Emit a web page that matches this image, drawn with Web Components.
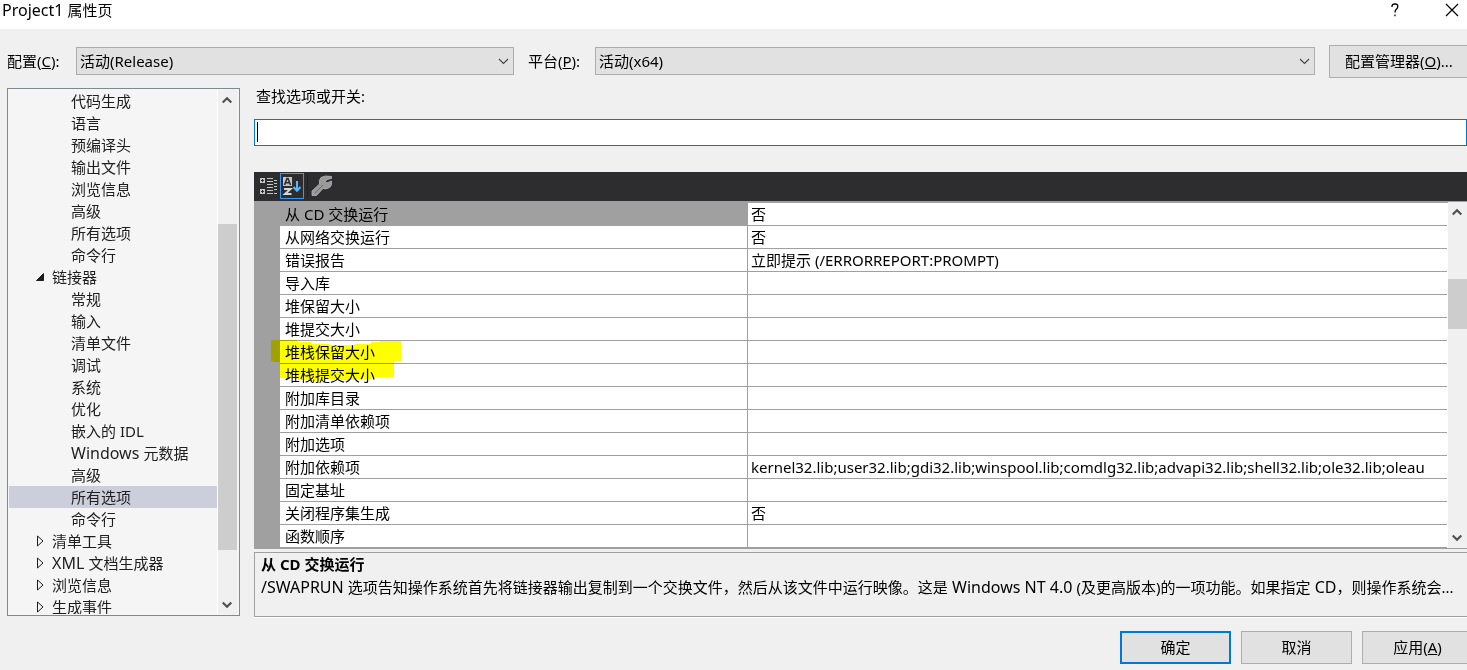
<!DOCTYPE html>
<html lang="zh-CN">
<head>
<meta charset="utf-8">
<title>Project1 属性页</title>
<style>
  html, body { margin: 0; height: 100%; }
  body {
    --ui-font: "Noto Sans", "Noto Sans CJK SC", sans-serif;
    font: 15px/22px var(--ui-font);
    color: #000;
    background: #f0f0f0;
    overflow: hidden;
  }
</style>
</head>
<body>
<property-dialog></property-dialog>

<script>
class BaseElement extends HTMLElement {
  constructor() {
    super();
    this.attachShadow({ mode: 'open' });
    const t = document.createElement('template');
    t.innerHTML = '<style>*{box-sizing:border-box}</style>' + this.constructor.markup;
    this.shadowRoot.append(t.content.cloneNode(true));
  }
  $(selector) { return this.shadowRoot.querySelector(selector); }
}

/* Caption bar with the help and close buttons */
class TitleBar extends BaseElement {
  static markup = `
    <style>
      :host { display: flex; align-items: flex-start; height: 29px; background: #fff; padding-left: 2px; flex: none; }
      h1 { flex: 1; margin: 0; font: inherit; line-height: 20px; }
      button { border: 0; padding: 0; background: none; font: inherit; width: 30px; height: 20px; display: grid; place-items: center; }
      .help { margin-right: 27px; }
      svg { display: block; }
      ::slotted(.latin) { font-size: 16px; }
    </style>
    <h1><slot></slot></h1>
    <button class="help" aria-label="帮助"><svg width="8" height="14" viewBox="0 0 8 14" fill="none" stroke="#000" stroke-width="1.300"><path d="M1 4V3Q1.200 1 4 1Q6.800 1 6.800 3.500Q6.800 5 5.300 6.200Q4 7.300 4 9.500M4 11.500V13.200"/></svg></button>
    <button aria-label="关闭"><svg width="14" height="14" viewBox="0 0 14 14" fill="none" stroke="#000" stroke-width="1.200"><path d="M1 1L13 13M13 1L1 13"/></svg></button>`;
}
customElements.define('title-bar', TitleBar);

/* Label with a drop-down */
class FieldSelect extends BaseElement {
  static markup = `
    <style>
      :host { display: flex; align-items: center; min-width: 0; }
      label { flex: none; width: var(--label-width, 68px); }
      .box { flex: 1; min-width: 0; display: grid; align-items: center; position: relative; }
      select { appearance: none; width: 100%; height: 28px; margin: 0; padding: 0 24px 0 3px; border: 1px solid #adadad; border-radius: 0; background: #e1e1e1; color: #000; font: inherit; }
      svg { position: absolute; right: 5px; pointer-events: none; }
    </style>
    <label for="s"><slot></slot></label>
    <div class="box"><select id="s"><option></option></select>
      <svg width="11" height="7" viewBox="0 0 11 7" fill="none" stroke="#444" stroke-width="1.100"><path d="M1 1L5.500 5.500L10 1"/></svg></div>`;
  connectedCallback() { this.$('option').textContent = this.getAttribute('value'); }
}
customElements.define('field-select', FieldSelect);

class PushButton extends BaseElement {
  static markup = `
    <style>
      :host { display: block; flex: none; width: 111px; }
      button { width: 100%; height: 33px; padding: 0 0 2px; border: 1px solid #adadad; background: #e1e1e1; color: #000; font: inherit; }
      :host([primary]) button { border: 2px solid #0078d7; }
    </style>
    <button type="button"><slot></slot></button>`;
}
customElements.define('push-button', PushButton);

/* Vertical scroll bar; before / size / after give the proportions of the track */
class ScrollBar extends BaseElement {
  static markup = `
    <style>
      :host { display: flex; flex-direction: column; flex: none; width: 19px; background: #f0f0f0; }
      button { flex: none; height: 19px; padding: 0; border: 0; background: none; display: grid; place-items: center; }
      .thumb { background: #cdcdcd; }
    </style>
    <button aria-label="向上滚动"><svg width="11" height="8" viewBox="0 0 11 8" fill="none" stroke="#505050" stroke-width="2.200"><path d="M.7 6.500L5 2.200L9.300 6.500"/></svg></button>
    <div class="before"></div><div class="thumb"></div><div class="after"></div>
    <button aria-label="向下滚动"><svg width="11" height="8" viewBox="0 0 11 8" fill="none" stroke="#505050" stroke-width="2.200"><path d="M.7 1.500L5 5.800L9.300 1.500"/></svg></button>`;
  connectedCallback() {
    this.$('.before').style.flex = this.getAttribute('before');
    this.$('.thumb').style.flex = this.getAttribute('size');
    this.$('.after').style.flex = this.getAttribute('after');
  }
}
customElements.define('scroll-bar', ScrollBar);

class TreeItem extends BaseElement {
  static markup = `
    <style>
      :host { display: flex; align-items: center; height: 22px; flex: none; padding-left: 62px; color: #1e1e1e; white-space: nowrap; }
      :host([branch]) { padding-left: 25px; }
      :host([selected]) { background: #cccedb; }
      svg { display: none; width: 12px; height: 12px; margin-right: 6px; fill: none; stroke: #1e1e1e; }
      :host([branch="closed"]) .closed, :host([branch="open"]) .open { display: block; }
      ::slotted(.latin) { font-size: 16px; }
    </style>
    <svg class="closed" viewBox="0 0 12 12"><path d="M3.500 1V11L9 6Z"/></svg>
    <svg class="open" viewBox="0 0 12 12"><path d="M9.500 2.500V9.500H2.500Z" fill="#1e1e1e"/></svg>
    <div><slot></slot></div>`;
}
customElements.define('tree-item', TreeItem);

class NavTree extends BaseElement {
  static markup = `
    <style>
      :host { display: flex; flex: none; width: 233px; padding: 1px; border: 1px solid #828790; background: #f5f5f5; overflow: hidden; }
      .items { flex: 1; display: flex; flex-direction: column; min-height: 0; overflow: hidden; }
      scroll-bar { border-left: 1px solid #fff; width: 20px; margin-right: 1px; }
    </style>
    <div class="items" role="tree"><slot></slot></div>
    <scroll-bar before="115" size="326" after="45"></scroll-bar>`;
}
customElements.define('nav-tree', NavTree);

class SearchField extends BaseElement {
  static markup = `
    <style>
      :host { display: block; }
      label { display: block; padding-left: 2px; margin-bottom: 12px; }
      input { display: block; width: 100%; height: 27px; padding: 0 4px; border: 1px solid #0078d7; border-radius: 0; outline: 0; font: inherit; caret-color: transparent;
        background: linear-gradient(#000, #000) 2px 2px / 1px 20px no-repeat #fff; }
    </style>
    <label for="q"><slot></slot></label>
    <input id="q" type="text">`;
}
customElements.define('search-field', SearchField);

class GridToolbar extends BaseElement {
  static markup = `
    <style>
      :host { display: flex; align-items: center; height: 29px; padding: 0 2px 2px; background: #2d2d30; }
      button { width: 24px; height: 26px; margin: 0; padding: 0; border: 0; background: none; display: grid; place-items: center; }
      .on { border: 1px solid #3399ff; }
      hr { width: 1px; height: 23px; margin: 0 2px 0 3px; border: 0; background: #222224; }
    </style>
    <button aria-label="按类别"><svg width="18" height="18" viewBox="0 0 18 18"><path fill="#c5c5c5" d="M1 1h5v5H1zM1 12h5v5H1z"/><path stroke="#2d2d30" d="M3.500 2v3M2 3.500h3M3.500 13v3M2 14.500h3"/><path stroke="#c5c5c5" d="M8 1.500h6M8 4.500h6M8 7.500h6M8 10.500h6M8 13.500h6M8 16.500h6M15 3.500h3M15 6.500h3M15 9.500h3M15 12.500h3M15 16.500h3"/></svg></button>
    <button class="on" aria-label="按字母顺序"><svg width="20" height="20" viewBox="0 0 20 20" fill="none"><path fill="#c5c5c5" d="M1 1h9v9H1z"/><path stroke="#2d2d30" stroke-width="1.600" d="M2.500 9L5 2.500H6L8.500 9M3.500 6.800H7.500"/><path stroke="#d6d6d6" stroke-width="2" d="M2 13H8.500L3 18H9.500"/><path stroke="#55b8ff" stroke-width="2" d="M15 5V14M11.500 11L15 14.700L18.500 11"/></svg></button>
    <hr>
    <button aria-label="属性页"><svg width="22" height="22" viewBox="0 0 22 22"><path fill="#999" stroke="#b5b5b5" stroke-width=".8" d="M1 20.500V16L8.500 9Q7.500 5 10 2.500Q13.500 0 20.500 1.500V3.500L16 4.500L14.500 6.500L16 8L20.500 6V9.500Q20 12 17.500 13Q15 14.500 12 13.500L5.500 20.500Z"/><path stroke="#6d6d6d" d="M4 18L12 10"/></svg></button>`;
}
customElements.define('grid-toolbar', GridToolbar);

class PropertyGrid extends BaseElement {
  static markup = `
    <style>
      :host { display: flex; position: relative; padding-left: 26px; border-top: 1px solid #a0a0a0; border-bottom: 1px solid #a0a0a0; background: #a0a0a0; }
      .body { flex: 1; min-width: 0; background: #fff; padding-right: 1px; border-top: 1px solid #a0a0a0; }
      table { width: 100%; table-layout: fixed; border-collapse: separate; border-spacing: 0; }
      th, td { height: 23px; padding: 0 0 0 3px; border-bottom: 1px solid #a0a0a0; font-weight: 400; text-align: left; line-height: 22px; white-space: nowrap; overflow: hidden; }
      th { width: 468px; padding-left: 5px; border-right: 1px solid #a0a0a0; }
      tr.current th { background: #a0a0a0; }
      .marker { position: absolute; left: 17px; top: 138px; mix-blend-mode: multiply; pointer-events: none; }
    </style>
    <div class="body"><table><tbody></tbody></table></div>
    <scroll-bar before="58" size="50" after="199"></scroll-bar>
    <svg class="marker" width="131" height="42" viewBox="0 0 131 42" fill="#ff0"><path d="M0 0H26V2H40V4H58V5H84V4H100V2H109V1H130V21H123V37H101V39H82V40H68V39H54V41H40V40H27V38H9V22H2V21H0Z"/></svg>`;
  connectedCallback() {
    const rows = [
      ['从 CD 交换运行', '否'], ['从网络交换运行', '否'], ['错误报告', '立即提示 (/ERRORREPORT:PROMPT)'],
      ['导入库', ''], ['堆保留大小', ''], ['堆提交大小', ''], ['堆栈保留大小', ''], ['堆栈提交大小', ''],
      ['附加库目录', ''], ['附加清单依赖项', ''], ['附加选项', ''],
      ['附加依赖项', 'kernel32.lib;user32.lib;gdi32.lib;winspool.lib;comdlg32.lib;advapi32.lib;shell32.lib;ole32.lib;oleau'],
      ['固定基址', ''], ['关闭程序集生成', '否'], ['函数顺序', '']
    ];
    const body = this.$('tbody');
    rows.forEach(([name, value], i) => {
      const tr = body.insertRow();
      if (i === 0) tr.className = 'current';
      const th = document.createElement('th');
      th.scope = 'row';
      th.textContent = name;
      tr.append(th);
      tr.insertCell().textContent = value;
    });
  }
}
customElements.define('property-grid', PropertyGrid);

class DescriptionPane extends BaseElement {
  static markup = `
    <style>
      :host { display: block; flex: 1; margin-top: 3px; padding: 0 0 0 6px; border: 1px solid #a0a0a0; border-right: 0; box-shadow: 0 1px #fff; overflow: hidden; }
      h2 { margin: 0; font-size: 15px; line-height: 22px; font-weight: 700; }
      p { margin: 0; line-height: 24px; white-space: nowrap; }
      ::slotted(.latin) { font-size: 16px; }
    </style>
    <h2><slot name="title"></slot></h2>
    <p><slot></slot></p>`;
}
customElements.define('description-pane', DescriptionPane);

class PropertyDialog extends BaseElement {
  static markup = `
    <style>
      :host { display: flex; flex-direction: column; min-height: 100vh; overflow: hidden; }
      .config { display: flex; align-items: flex-start; flex: none; padding: 16px 0 10px 7px; gap: 14px; }
      .config field-select { margin-top: 2px; }
      .config field-select:nth-child(1) { flex: 507; --label-width: 69px; }
      .config field-select:nth-child(2) { flex: 787; --label-width: 67px; }
      .config push-button { width: 140px; margin-right: -2px; }
      main { display: flex; flex: 1; gap: 14px; padding-left: 7px; }
      nav-tree { height: 528px; }
      section { flex: 1; min-width: 0; display: flex; flex-direction: column; }
      search-field { padding-bottom: 26px; margin-top: -3px; }
      footer { display: flex; flex: none; justify-content: flex-end; gap: 10px; padding: 14px 0 6px; margin-right: -6px; }
    </style>
    <title-bar><span class="latin">Project1 </span>属性页</title-bar>
    <div class="config">
      <field-select value="活动(Release)">配置(<u>C</u>):</field-select>
      <field-select value="活动(x64)">平台(<u>P</u>):</field-select>
      <push-button>配置管理器(<u>O</u>)...</push-button>
    </div>
    <main>
      <nav-tree>
        <tree-item>代码生成</tree-item>
        <tree-item>语言</tree-item>
        <tree-item>预编译头</tree-item>
        <tree-item>输出文件</tree-item>
        <tree-item>浏览信息</tree-item>
        <tree-item>高级</tree-item>
        <tree-item>所有选项</tree-item>
        <tree-item>命令行</tree-item>
        <tree-item branch="open">链接器</tree-item>
        <tree-item>常规</tree-item>
        <tree-item>输入</tree-item>
        <tree-item>清单文件</tree-item>
        <tree-item>调试</tree-item>
        <tree-item>系统</tree-item>
        <tree-item>优化</tree-item>
        <tree-item>嵌入的 IDL</tree-item>
        <tree-item><span class="latin">Windows </span>元数据</tree-item>
        <tree-item>高级</tree-item>
        <tree-item selected>所有选项</tree-item>
        <tree-item>命令行</tree-item>
        <tree-item branch="closed">清单工具</tree-item>
        <tree-item branch="closed"><span class="latin">XML </span>文档生成器</tree-item>
        <tree-item branch="closed">浏览信息</tree-item>
        <tree-item branch="closed">生成事件</tree-item>
      </nav-tree>
      <section>
        <search-field>查找选项或开关:</search-field>
        <grid-toolbar></grid-toolbar>
        <property-grid></property-grid>
        <description-pane><span slot="title">从 CD 交换运行</span><span class="latin">/SWAPRUN </span>选项告知操作系统首先将链接器输出复制到一个交换文件，然后从该文件中运行映像。这是<span class="latin"> Windows NT 4.0 </span>(及更高版本)的一项功能。如果指定<span class="latin"> CD</span>，则操作系统会...</description-pane>
      </section>
    </main>
    <footer>
      <push-button primary>确定</push-button>
      <push-button>取消</push-button>
      <push-button>应用(<u>A</u>)</push-button>
    </footer>`;
}
customElements.define('property-dialog', PropertyDialog);
</script>
</body>
</html>
